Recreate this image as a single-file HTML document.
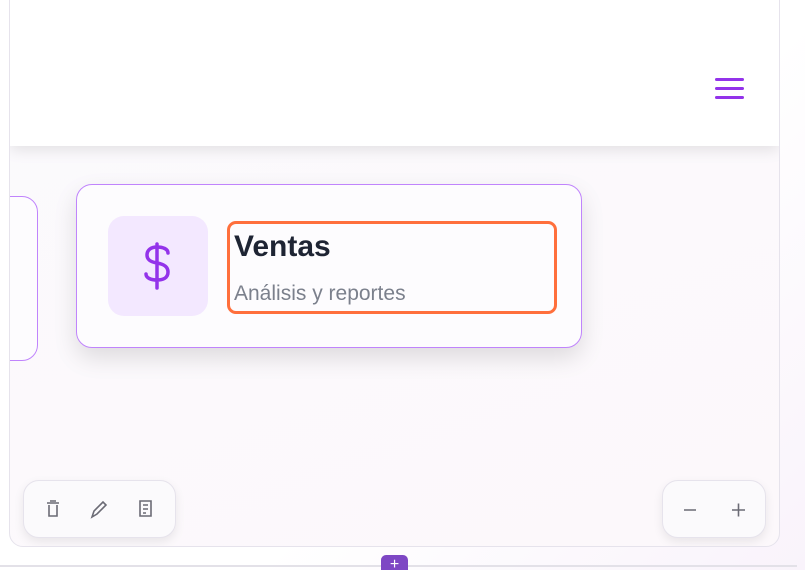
<!DOCTYPE html>
<html><head><style>
html,body{margin:0;padding:0;width:805px;height:570px;overflow:hidden;background:linear-gradient(135deg,#fff 60%,#f9f3fb);font-family:"Liberation Sans","DejaVu Sans",sans-serif;position:relative}
.frame{position:absolute;left:9px;top:-21px;width:769px;height:566px;border:1px solid #e6e3ec;border-radius:14px;background:linear-gradient(160deg,#fbfafd,#fcf8fb);overflow:hidden}
.header{position:absolute;left:0;top:0;right:0;height:166px;background:#fff;box-shadow:0 4px 14px rgba(0,0,0,.1)}
.ham{position:absolute;left:705px;top:98px}
.ham div{width:29px;height:3px;background:#9333ea;border-radius:2px;margin-bottom:6px}
.left{position:absolute;left:-20px;top:216px;width:46px;height:163px;border:1.5px solid #c084fc;border-radius:16px;background:#fdfcfe}
.card{position:absolute;left:66px;top:204px;width:504px;height:162px;border:1.5px solid #c084fc;border-radius:16px;background:#fdfcfe;box-shadow:0 10px 24px rgba(0,0,0,.12)}
.ib{position:absolute;left:31px;top:31px;width:100px;height:100px;border-radius:16px;background:#f3e8ff}
.ob{position:absolute;left:150px;top:36px;width:324px;height:87px;border:3px solid #ff6f3c;border-radius:9px}
.t{position:absolute;left:4px;top:6px;font-size:30px;font-weight:bold;color:#1e2433}
.s{position:absolute;left:4px;top:58px;font-size:21px;color:#7b808c}
.tb{position:absolute;top:500px;height:56px;border:1px solid #e6e3ec;border-radius:16px;background:#fbfafc;box-shadow:0 4px 10px rgba(0,0,0,.08)}
.line{position:absolute;left:0;top:565px;width:797px;height:2px;background:#e3e1e8}
.pb{position:absolute;left:381px;top:555px;width:27px;height:20px;border-radius:5px;background:#7e47c4;color:#fff;font-size:16px;text-align:center;line-height:20px}
</style></head><body>
<div class="frame">
 <div class="header"><div class="ham"><div></div><div></div><div></div></div></div>
 <div class="left"></div>
 <div class="card">
  <div class="ib"><svg width="100" height="100" viewBox="0 0 100 100"><path d="M49 28v44M60 37c0-4-5-6-11-6s-10 3-10 8 4 7 10 8 11 3 11 9-5 8-11 8-11-2-11-6" fill="none" stroke="#9333ea" stroke-width="3.5" stroke-linecap="round"/></svg></div>
  <div class="ob"><div class="t">Ventas</div><div class="s">Análisis y reportes</div></div>
 </div>
 <div class="tb" style="left:13px;width:151px">
  <svg width="151" height="56" viewBox="0 0 151 56" fill="none" stroke="#6b6b75" stroke-width="1.6">
   <path d="M23 22h12M26 20h6M25 24v11h8V24"/>
   <path d="M68 36l2-6 9-9 3 3-9 9z"/>
   <path d="M116 20h11v15h-11zM119 24h5M119 28h5M119 32h3"/>
  </svg>
 </div>
 <div class="tb" style="left:652px;width:102px">
  <svg width="102" height="56" viewBox="0 0 102 56" stroke="#6b6b75" stroke-width="1.6"><path d="M21 29h12M69 29h13M75.5 22.5v13"/></svg>
 </div>
</div>
<div class="line"></div>
<div class="pb">+</div>
</body></html>
